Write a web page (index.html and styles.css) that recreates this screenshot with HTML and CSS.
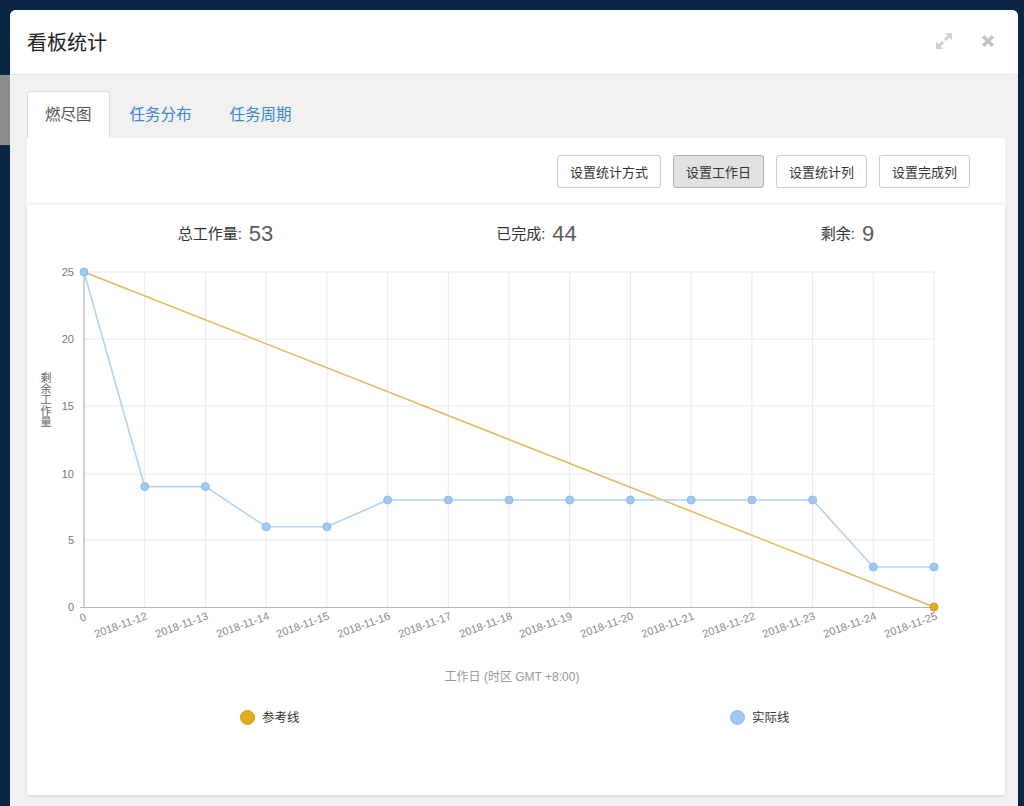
FILE: index.html
```html
<!DOCTYPE html>
<html lang="zh-CN">
<head>
<meta charset="utf-8">
<title>看板统计</title>
<link rel="stylesheet" href="styles.css">
</head>
<body>
<div class="backdrop-strip"></div>
<div class="modal">
  <div class="modal-header">
    <h4 class="modal-title">看板统计</h4>
    <div class="modal-tools">
      <svg class="icon-expand" width="20" height="20" viewBox="0 0 20 20">
        <path d="M11 2 H18 V9 L15.5 6.5 L12 10 L10 8 L13.5 4.5 Z"/>
        <path d="M9 18 H2 V11 L4.5 13.5 L8 10 L10 12 L6.5 15.5 Z"/>
      </svg>
      <svg class="icon-close" width="16" height="16" viewBox="0 0 16 16">
        <path d="M2 4.5 L4.5 2 L8 5.5 L11.5 2 L14 4.5 L10.5 8 L14 11.5 L11.5 14 L8 10.5 L4.5 14 L2 11.5 L5.5 8 Z"/>
      </svg>
    </div>
  </div>
  <div class="modal-body">
    <ul class="tabs">
      <li class="tab active">燃尽图</li>
      <li class="tab">任务分布</li>
      <li class="tab">任务周期</li>
    </ul>
    <div class="panel">
      <div class="toolbar">
        <button class="btn">设置统计方式</button>
        <button class="btn active">设置工作日</button>
        <button class="btn">设置统计列</button>
        <button class="btn">设置完成列</button>
      </div>
      <div class="card">
        <div class="stats">
          <div class="stat"><span class="stat-label">总工作量:</span><span class="stat-num">53</span></div>
          <div class="stat"><span class="stat-label">已完成:</span><span class="stat-num">44</span></div>
          <div class="stat"><span class="stat-label">剩余:</span><span class="stat-num">9</span></div>
        </div>
        <svg class="chart" width="978" height="500" viewBox="27 246 978 500">
          <g class="grid">
            <line x1="84" y1="272" x2="934" y2="272"/>
            <line x1="84" y1="339" x2="934" y2="339"/>
            <line x1="84" y1="406" x2="934" y2="406"/>
            <line x1="84" y1="474" x2="934" y2="474"/>
            <line x1="84" y1="540" x2="934" y2="540"/>
            <line x1="144.7" y1="272" x2="144.7" y2="607"/>
            <line x1="205.4" y1="272" x2="205.4" y2="607"/>
            <line x1="266.1" y1="272" x2="266.1" y2="607"/>
            <line x1="326.9" y1="272" x2="326.9" y2="607"/>
            <line x1="387.6" y1="272" x2="387.6" y2="607"/>
            <line x1="448.3" y1="272" x2="448.3" y2="607"/>
            <line x1="509" y1="272" x2="509" y2="607"/>
            <line x1="569.7" y1="272" x2="569.7" y2="607"/>
            <line x1="630.4" y1="272" x2="630.4" y2="607"/>
            <line x1="691.1" y1="272" x2="691.1" y2="607"/>
            <line x1="751.9" y1="272" x2="751.9" y2="607"/>
            <line x1="812.6" y1="272" x2="812.6" y2="607"/>
            <line x1="873.3" y1="272" x2="873.3" y2="607"/>
            <line x1="934" y1="272" x2="934" y2="607"/>
          </g>
          <line class="axis" x1="84" y1="272" x2="84" y2="608"/>
          <line class="axis" x1="80" y1="607.5" x2="934" y2="607.5"/>
          <g class="ylabels">
            <text x="74" y="276">25</text>
            <text x="74" y="343">20</text>
            <text x="74" y="410">15</text>
            <text x="74" y="478">10</text>
            <text x="74" y="544">5</text>
            <text x="74" y="611">0</text>
          </g>
          <text class="ytitle" x="46" y="400">剩余工作量</text>
          <g class="xlabels">
            <text transform="translate(87 620) rotate(-20)">0</text>
            <text transform="translate(148 619) rotate(-20)">2018-11-12</text>
            <text transform="translate(209 619) rotate(-20)">2018-11-13</text>
            <text transform="translate(270 619) rotate(-20)">2018-11-14</text>
            <text transform="translate(330 619) rotate(-20)">2018-11-15</text>
            <text transform="translate(391 619) rotate(-20)">2018-11-16</text>
            <text transform="translate(452 619) rotate(-20)">2018-11-17</text>
            <text transform="translate(513 619) rotate(-20)">2018-11-18</text>
            <text transform="translate(573 619) rotate(-20)">2018-11-19</text>
            <text transform="translate(634 619) rotate(-20)">2018-11-20</text>
            <text transform="translate(695 619) rotate(-20)">2018-11-21</text>
            <text transform="translate(756 619) rotate(-20)">2018-11-22</text>
            <text transform="translate(816 619) rotate(-20)">2018-11-23</text>
            <text transform="translate(877 619) rotate(-20)">2018-11-24</text>
            <text transform="translate(938 619) rotate(-20)">2018-11-25</text>
          </g>
          <polyline class="ref-line" points="84,272 934,607"/>
          <polyline class="actual-line" points="84,272 144.7,486.6 205.4,486.6 266.1,526.8 326.9,526.8 387.6,500 448.3,500 509,500 569.7,500 630.4,500 691.1,500 751.9,500 812.6,500 873.3,567 934,567"/>
          <g class="actual-dots">
            <circle cx="84" cy="272" r="4"/>
            <circle cx="144.7" cy="486.6" r="4"/>
            <circle cx="205.4" cy="486.6" r="4"/>
            <circle cx="266.1" cy="526.8" r="4"/>
            <circle cx="326.9" cy="526.8" r="4"/>
            <circle cx="387.6" cy="500" r="4"/>
            <circle cx="448.3" cy="500" r="4"/>
            <circle cx="509" cy="500" r="4"/>
            <circle cx="569.7" cy="500" r="4"/>
            <circle cx="630.4" cy="500" r="4"/>
            <circle cx="691.1" cy="500" r="4"/>
            <circle cx="751.9" cy="500" r="4"/>
            <circle cx="812.6" cy="500" r="4"/>
            <circle cx="873.3" cy="567" r="4"/>
            <circle cx="934" cy="567" r="4"/>
          </g>
          <circle class="ref-dot" cx="934" cy="607" r="4"/>
          <text class="xtitle" x="512" y="681">工作日 (时区 GMT +8:00)</text>
          <circle class="ref-dot" cx="247.5" cy="717.5" r="7"/>
          <text class="legend" x="262" y="722">参考线</text>
          <circle class="actual-legend" cx="737.5" cy="717.5" r="7"/>
          <text class="legend" x="752" y="722">实际线</text>
        </svg>
      </div>
    </div>
  </div>
</div>
</body>
</html>
```

FILE: styles.css
```css
* { box-sizing: border-box; }
html, body { margin: 0; padding: 0; }
body {
  background: #0b2745;
  width: 1024px;
  height: 806px;
  overflow: hidden;
  padding: 10px 6px 0 10px;
  font-family: "Liberation Sans", "Noto Sans CJK SC", sans-serif;
  color: #333;
}
.backdrop-strip {
  position: absolute;
  left: 0;
  top: 75px;
  width: 10px;
  height: 70px;
  background: #8c8c8c;
}
.modal {
  position: relative;
  width: 1008px;
  height: 820px;
  background: #f1f1f1;
  border-radius: 6px 6px 0 0;
  overflow: hidden;
}
.modal-header {
  height: 65px;
  background: #fff;
  border-bottom: 1px solid #e6e6e6;
  display: flex;
  align-items: center;
  justify-content: space-between;
  padding: 0 22px 0 17px;
}
.modal-title {
  margin: 0;
  font-size: 20px;
  font-weight: normal;
  color: #222;
  letter-spacing: 0;
  padding-bottom: 2px;
}
.modal-tools {
  display: flex;
  align-items: center;
  gap: 26px;
  padding-bottom: 3px;
}
.icon-expand path { fill: #cfcfcf; }
.icon-close path { fill: #c4c4c4; }
.modal-body {
  padding: 16px 13px 0 17px;
}
.tabs {
  list-style: none;
  margin: 0;
  padding: 0;
  display: flex;
  gap: 2px;
  height: 47px;
}
.tab {
  padding: 0 17px;
  height: 47px;
  line-height: 46px;
  font-size: 15.5px;
  color: #3a86d0;
  border: 1px solid transparent;
  border-bottom: none;
  border-radius: 4px 4px 0 0;
}
.tab.active {
  background: #fff;
  color: #555;
  border-color: #dcdcdc;
}
.panel {
  background: #f6f6f6;
}
.toolbar {
  height: 67px;
  background: #fff;
  display: flex;
  justify-content: flex-end;
  align-items: center;
  gap: 12px;
  padding: 0 35px 0 0;
  border-bottom: 3px solid #f5f5f5;
}
.btn {
  height: 33px;
  padding: 0 12px;
  font-family: "Liberation Sans", "Noto Sans CJK SC", sans-serif;
  font-size: 13px;
  color: #333;
  background: #fff;
  border: 1px solid #cccccc;
  border-radius: 3px;
  margin-top: 3px;
}
.btn.active {
  background: #e1e1e1;
  border-color: #adadad;
}
.card {
  height: 590px;
  background: #fff;
  box-shadow: 0 1px 3px rgba(0,0,0,0.12);
  padding-top: 16px;
}
.stats {
  display: grid;
  grid-template-columns: repeat(3, 311px);
  padding-left: 43px;
  height: 25px;
}
.stat {
  text-align: center;
  line-height: 25px;
  white-space: nowrap;
}
.stat-label {
  font-size: 15px;
  color: #333;
  margin-right: 7px;
}
.stat-num {
  font-size: 22px;
  color: #5c5c5c;
  vertical-align: top;
}
.chart {
  display: block;
}
.grid line {
  stroke: #e9e9e9;
  stroke-width: 1;
}
.axis {
  stroke: #b5b5b5;
  stroke-width: 1.2;
}
.ylabels text {
  font-size: 11px;
  fill: #777;
  text-anchor: end;
  font-family: "Liberation Sans", sans-serif;
}
.xlabels text {
  font-size: 11px;
  fill: #888;
  text-anchor: end;
  font-family: "Liberation Sans", sans-serif;
}
.ytitle {
  font-size: 11px;
  fill: #666;
  text-anchor: middle;
  writing-mode: vertical-rl;
  font-family: "Noto Sans CJK SC", sans-serif;
}
.ref-line {
  fill: none;
  stroke: #e2b85c;
  stroke-width: 1.5;
}
.actual-line {
  fill: none;
  stroke: #b3d3ef;
  stroke-width: 1.6;
}
.actual-dots circle {
  fill: #9fc9f0;
  stroke: #8ebde9;
  stroke-width: 1;
}
.ref-dot {
  fill: #e3ab1f;
  stroke: #d49e1a;
  stroke-width: 1;
}
.actual-legend {
  fill: #9fc9f0;
  stroke: #8ebde9;
  stroke-width: 1;
}
.xtitle {
  font-size: 12px;
  fill: #999;
  text-anchor: middle;
  font-family: "Liberation Sans", "Noto Sans CJK SC", sans-serif;
}
.legend {
  font-size: 12.5px;
  fill: #333;
  font-family: "Liberation Sans", "Noto Sans CJK SC", sans-serif;
}
```
